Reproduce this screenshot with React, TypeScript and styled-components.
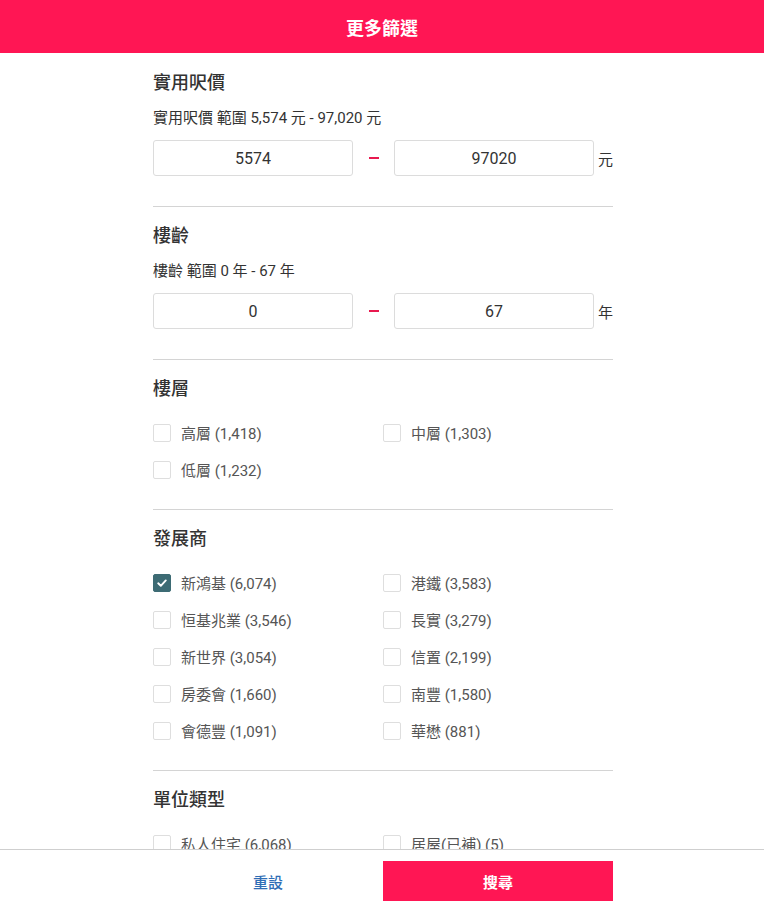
import * as React from 'react';
import styled, { createGlobalStyle } from 'styled-components';

const PINK = '#ff1654';

const GlobalStyle = createGlobalStyle`
  html, body {
    margin: 0;
    padding: 0;
    background: #fff;
  }
  body {
    font-family: Roboto, "Noto Sans CJK TC", "Noto Sans", sans-serif;
    color: #333;
  }
  * {
    box-sizing: border-box;
  }
`;

type RangeFilter = {
  title: string;
  hint: string;
  min: string;
  max: string;
  unit: string;
};

type Option = { label: string; checked?: boolean };

type CheckFilter = {
  title: string;
  options: Option[];
};

const RANGES: RangeFilter[] = [
  {
    title: '實用呎價',
    hint: '實用呎價 範圍 5,574 元 - 97,020 元',
    min: '5574',
    max: '97020',
    unit: '元',
  },
  {
    title: '樓齡',
    hint: '樓齡 範圍 0 年 - 67 年',
    min: '0',
    max: '67',
    unit: '年',
  },
];

const CHECKS: CheckFilter[] = [
  {
    title: '樓層',
    options: [
      { label: '高層 (1,418)' },
      { label: '中層 (1,303)' },
      { label: '低層 (1,232)' },
    ],
  },
  {
    title: '發展商',
    options: [
      { label: '新鴻基 (6,074)', checked: true },
      { label: '港鐵 (3,583)' },
      { label: '恒基兆業 (3,546)' },
      { label: '長實 (3,279)' },
      { label: '新世界 (3,054)' },
      { label: '信置 (2,199)' },
      { label: '房委會 (1,660)' },
      { label: '南豐 (1,580)' },
      { label: '會德豐 (1,091)' },
      { label: '華懋 (881)' },
    ],
  },
  {
    title: '單位類型',
    options: [
      { label: '私人住宅 (6,068)' },
      { label: '居屋(已補) (5)' },
      { label: '居屋(未補) (3)' },
      { label: '村屋 (1)' },
    ],
  },
];

function RangeSection({ filter }: { filter: RangeFilter }) {
  return (
    <Section>
      <SectionTitle>{filter.title}</SectionTitle>
      <Hint>{filter.hint}</Hint>
      <RangeRow>
        <NumberBox value={filter.min} readOnly />
        <Dash />
        <NumberBox value={filter.max} readOnly />
        <Unit>{filter.unit}</Unit>
      </RangeRow>
    </Section>
  );
}

function CheckSection({ filter }: { filter: CheckFilter }) {
  return (
    <Section $list>
      <SectionTitle>{filter.title}</SectionTitle>
      <OptionGrid>
        {filter.options.map((o) => (
          <OptionRow key={o.label}>
            <Box $checked={!!o.checked}>
              {o.checked && (
                <svg width="12" height="12" viewBox="0 0 12 12">
                  <path
                    d="M2.2 6.3 L4.8 8.8 L9.8 3.4"
                    fill="none"
                    stroke="#fff"
                    strokeWidth="1.9"
                    strokeLinecap="round"
                    strokeLinejoin="round"
                  />
                </svg>
              )}
            </Box>
            <OptionLabel>{o.label}</OptionLabel>
          </OptionRow>
        ))}
      </OptionGrid>
    </Section>
  );
}

export default function App() {
  return (
    <>
      <GlobalStyle />
      <Page>
        <Header>更多篩選</Header>
        <Body>
          <Column>
            {RANGES.map((r) => (
              <RangeSection key={r.title} filter={r} />
            ))}
            {CHECKS.map((c) => (
              <CheckSection key={c.title} filter={c} />
            ))}
          </Column>
        </Body>
        <Footer>
          <FooterInner>
            <ResetButton>重設</ResetButton>
            <SearchButton>搜尋</SearchButton>
          </FooterInner>
        </Footer>
      </Page>
    </>
  );
}

const Page = styled.div`
  display: flex;
  flex-direction: column;
  height: 100vh;
  overflow: hidden;
`;

const Header = styled.header`
  flex: none;
  height: 53px;
  background: ${PINK};
  color: #fff;
  display: flex;
  align-items: center;
  justify-content: center;
  font-size: 18px;
  font-weight: 700;
`;

const Body = styled.main`
  flex: 1;
  overflow: hidden;
`;

const Column = styled.div`
  width: 460px;
  margin: 0 auto;
  position: relative;
  left: 1px;
`;

const Section = styled.section<{ $list?: boolean }>`
  padding: 17px 0 ${(p) => (p.$list ? '21px' : '30px')};
  border-bottom: 1px solid #d4d4d4;

  &:first-child {
    padding-top: 18px;
  }
`;

const SectionTitle = styled.h3`
  margin: 0;
  height: 24px;
  font-size: 18px;
  line-height: 24px;
  font-weight: 500;
  color: #333;
`;

const Hint = styled.p`
  margin: 13px 0 0;
  height: 20px;
  font-size: 15px;
  line-height: 20px;
  color: #333;
`;

const RangeRow = styled.div`
  display: flex;
  align-items: center;
  height: 36px;
  margin-top: 12px;
`;

const NumberBox = styled.input`
  width: 200px;
  height: 36px;
  border: 1px solid #dcdcdc;
  border-radius: 3px;
  text-align: center;
  font-family: inherit;
  font-size: 16px;
  font-weight: 400;
  color: #333;
  outline: none;
  padding: 0;
`;

const Dash = styled.span`
  width: 41px;
  display: flex;
  justify-content: center;

  &::before {
    content: '';
    width: 10px;
    height: 1.5px;
    background: #e8194f;
  }
`;

const Unit = styled.span`
  margin-left: 4px;
  font-size: 15px;
  color: #333;
`;

const OptionGrid = styled.div`
  display: grid;
  grid-template-columns: 230px 230px;
  margin-top: 13px;
`;

const OptionRow = styled.label`
  display: flex;
  align-items: center;
  height: 37px;
`;

const Box = styled.span<{ $checked: boolean }>`
  width: 18px;
  height: 18px;
  border-radius: 2px;
  border: 1px solid ${(p) => (p.$checked ? '#3d6b74' : '#dedede')};
  background: ${(p) => (p.$checked ? '#3d6b74' : '#fff')};
  display: flex;
  align-items: center;
  justify-content: center;
  flex: none;
`;

const OptionLabel = styled.span`
  margin-left: 10px;
  font-size: 15px;
  color: #555;
`;

const Footer = styled.footer`
  flex: none;
  height: 58px;
  border-top: 1px solid #cfcfcf;
  background: #fff;
  padding-top: 11px;
`;

const FooterInner = styled.div`
  width: 460px;
  margin: 0 auto;
  position: relative;
  left: 1px;
  display: grid;
  grid-template-columns: 1fr 1fr;
  height: 40px;
`;

const ResetButton = styled.button`
  border: none;
  background: transparent;
  color: #2f6db5;
  font-family: inherit;
  font-size: 15px;
  font-weight: 500;
  cursor: pointer;
`;

const SearchButton = styled.button`
  border: none;
  background: ${PINK};
  color: #fff;
  font-family: inherit;
  font-size: 15px;
  font-weight: 700;
  cursor: pointer;
`;
